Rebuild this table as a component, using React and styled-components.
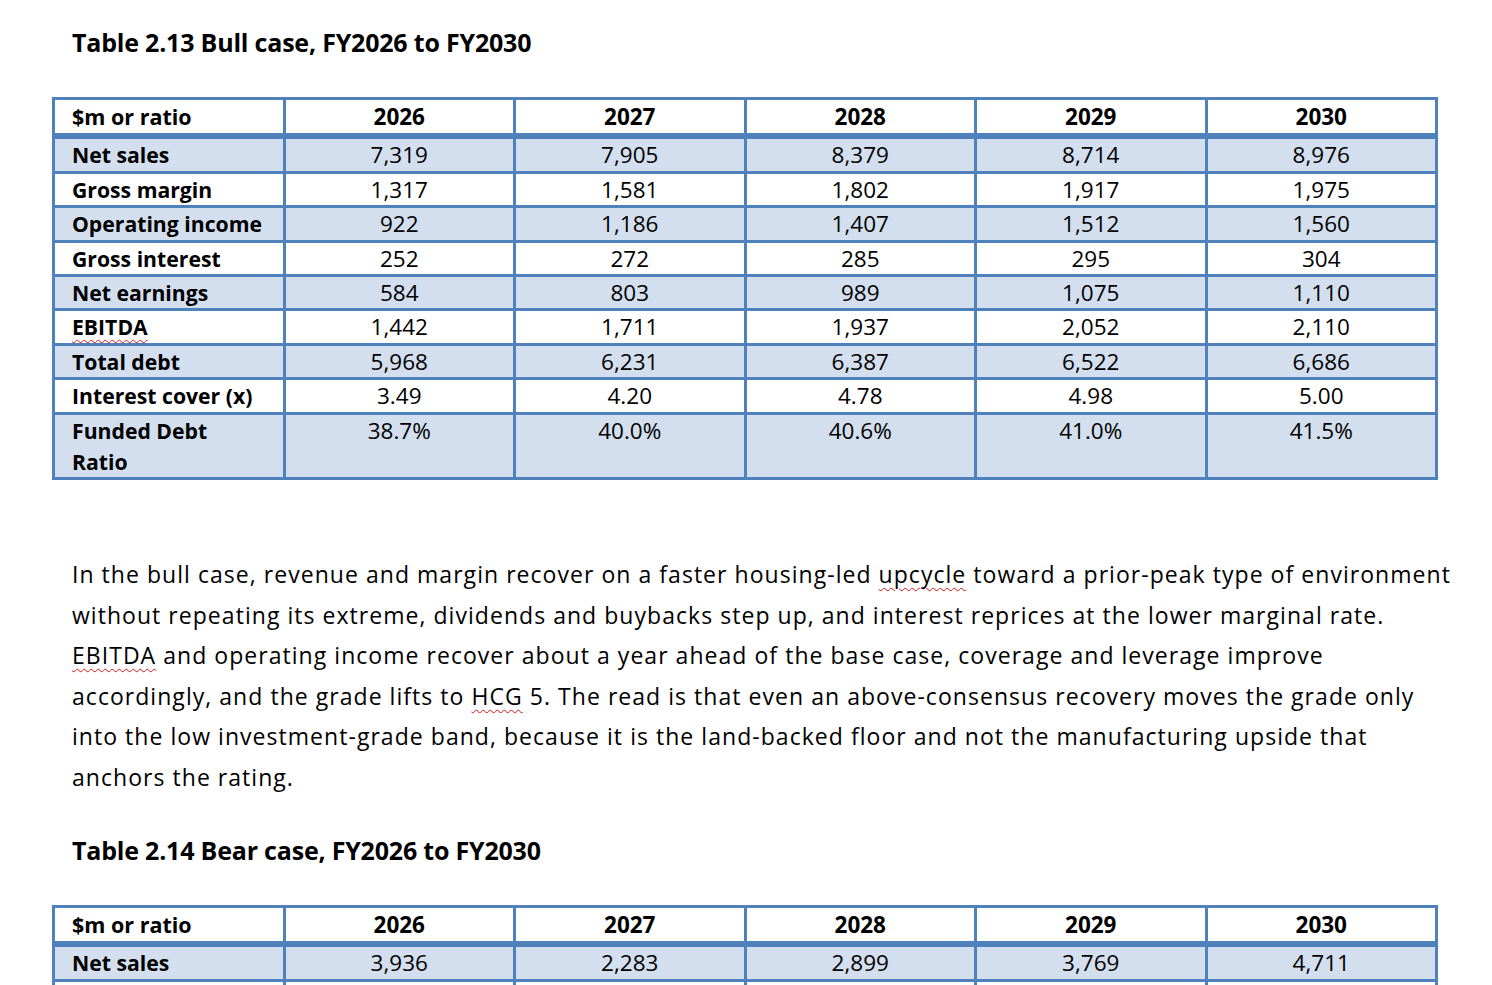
import styled, { createGlobalStyle } from "styled-components"

const GlobalStyle = createGlobalStyle`
    html, body {
        margin: 0;
        padding: 0;
        background: #ffffff;
    }

    body {
        font-family: "Open Sans", Lato, "Liberation Sans", Arial, sans-serif;
        color: #000000;
    }
`

const Page = styled.div`
    padding: 27px 0 40px 52px;
    width: 1440px;
`

const Caption = styled.h2`
    margin: 0 0 40px 20px;
    font-size: 25px;
    line-height: 30px;
    font-weight: 700;
    letter-spacing: -0.2px;
`

const DataTable = styled.table`
    width: 1386px;
    table-layout: fixed;
    border-collapse: collapse;
    border: 3px solid #4f81bd;
    font-size: 22.5px;

    td, th {
        border: 3px solid #4f81bd;
        padding: 0;
        line-height: 31.4px;
        vertical-align: top;
    }
`

const HeadCell = styled.th`
    font-weight: 700;
    font-size: ${(p) => (p.$left ? "21.5px" : "22.5px")};
    text-align: ${(p) => (p.$left ? "left" : "center")};
    padding-left: ${(p) => (p.$left ? "17px" : "0")} !important;
    padding-top: 1px !important;
    padding-bottom: 1px !important;
    border-bottom-width: 6px !important;
    background: #ffffff;
`

const Row = styled.tr`
    background: ${(p) => (p.$shaded ? "#d3dfee" : "#ffffff")};
`

const LabelCell = styled.td`
    font-weight: 700;
    font-size: 21.2px;
    text-align: left;
    padding-left: 17px !important;
`

const ValueCell = styled.td`
    text-align: center;
    font-weight: 400;
`

const Paragraph = styled.p`
    margin: 74px 0 38px 20px;
    font-size: 23px;
    line-height: 40.4px;
    letter-spacing: 1.04px;
`

const Line = styled.span`
    display: block;
    white-space: nowrap;
`

// red squiggle like a spell-checker mark
const Spell = styled.span`
    text-decoration: underline wavy #e01010;
    text-decoration-thickness: 1px;
    text-underline-offset: 4px;
`

const years = ["2026", "2027", "2028", "2029", "2030"]

const bullRows = [
    { label: "Net sales", values: ["7,319", "7,905", "8,379", "8,714", "8,976"] },
    { label: "Gross margin", values: ["1,317", "1,581", "1,802", "1,917", "1,975"] },
    { label: "Operating income", values: ["922", "1,186", "1,407", "1,512", "1,560"] },
    { label: "Gross interest", values: ["252", "272", "285", "295", "304"] },
    { label: "Net earnings", values: ["584", "803", "989", "1,075", "1,110"] },
    { label: <Spell>EBITDA</Spell>, values: ["1,442", "1,711", "1,937", "2,052", "2,110"] },
    { label: "Total debt", values: ["5,968", "6,231", "6,387", "6,522", "6,686"] },
    { label: "Interest cover (x)", values: ["3.49", "4.20", "4.78", "4.98", "5.00"] },
    { label: <>Funded Debt<br />Ratio</>, values: ["38.7%", "40.0%", "40.6%", "41.0%", "41.5%"] },
]

const bearRows = [
    { label: "Net sales", values: ["3,936", "2,283", "2,899", "3,769", "4,711"] },
    { label: "", values: ["", "", "", "", ""] },
]

function CaseTable({ rows }) {
    return (
        <DataTable>
            <thead>
                <tr>
                    <HeadCell $left>$m or ratio</HeadCell>
                    {years.map((y) => <HeadCell key={y}>{y}</HeadCell>)}
                </tr>
            </thead>
            <tbody>
                {rows.map((row, i) => (
                    <Row key={i} $shaded={i % 2 === 0}>
                        <LabelCell>{row.label || "\u00a0"}</LabelCell>
                        {row.values.map((v, j) => <ValueCell key={j}>{v}</ValueCell>)}
                    </Row>
                ))}
            </tbody>
        </DataTable>
    )
}

function App() {
    return (
        <Page>
            <GlobalStyle />

            <Caption>Table 2.13 Bull case, FY2026 to FY2030</Caption>
            <CaseTable rows={bullRows} />

            <Paragraph>
                <Line>In the bull case, revenue and margin recover on a faster housing-led <Spell>upcycle</Spell> toward a prior-peak type of environment</Line>
                <Line>without repeating its extreme, dividends and buybacks step up, and interest reprices at the lower marginal rate.</Line>
                <Line><Spell>EBITDA</Spell> and operating income recover about a year ahead of the base case, coverage and leverage improve</Line>
                <Line>accordingly, and the grade lifts to <Spell>HCG</Spell> 5. The read is that even an above-consensus recovery moves the grade only</Line>
                <Line>into the low investment-grade band, because it is the land-backed floor and not the manufacturing upside that</Line>
                <Line>anchors the rating.</Line>
            </Paragraph>

            <Caption>Table 2.14 Bear case, FY2026 to FY2030</Caption>
            <CaseTable rows={bearRows} />
        </Page>
    )
}

export default App
